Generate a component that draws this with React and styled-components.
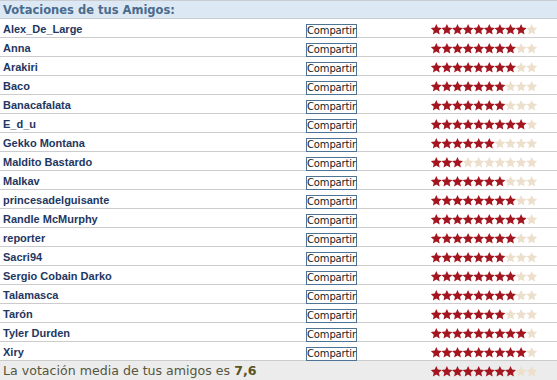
import React from "react";
import styled, { createGlobalStyle } from "styled-components";

const Global = createGlobalStyle`
  html, body { margin: 0; padding: 0; background: #ffffff; }
  body { font-family: "DejaVu Sans", Verdana, sans-serif; }
`;

const Panel = styled.div`
  width: 557px;
  display: flex;
  flex-direction: column;
`;

const Header = styled.div`
  height: 17px;
  border-top: 1px solid #c9cdd2;
  border-bottom: 1px solid #c9cdd2;
  background: #dce8f4;
  display: flex;
  align-items: center;
  padding-left: 3px;
  font-family: "DejaVu Sans", Verdana, sans-serif;
  font-weight: bold;
  font-size: 11.5px;
  color: #4a6b8c;
`;

const Row = styled.div`
  height: 18px;
  border-bottom: 1px solid #cccccc;
  display: grid;
  grid-template-columns: 303px 125px 1fr;
  align-items: center;
  padding-left: 3px;
  background: ${(p) => (p.$footer ? "#ececec" : "#ffffff")};
  ${(p) => (p.$footer ? "border-bottom: none; height: 19px;" : "")}
`;

const Name = styled.span`
  font-family: "Liberation Sans", Arial, sans-serif;
  font-weight: bold;
  font-size: 11px;
  color: #1e3762;
  white-space: nowrap;
`;

const ShareButton = styled.button`
  width: 51px;
  height: 14px;
  box-sizing: border-box;
  border: 1px solid #4f7394;
  background: #ffffff;
  padding: 0;
  margin: 0;
  overflow: visible;
  white-space: nowrap;
  text-align: left;
  font-family: "DejaVu Sans", Verdana, sans-serif;
  font-size: 10px;
  letter-spacing: -0.15px;
  line-height: 12px;
  color: #1a1a1a;
`;

const FooterText = styled.span`
  grid-column: 1 / 3;
  font-family: "DejaVu Sans", Verdana, sans-serif;
  font-size: 12.6px;
  color: #56563e;
  white-space: nowrap;
  b { color: #5a531c; }
`;

const StarSvg = styled.svg`
  display: block;
  margin-top: 1px;
`;

const starPoints = (cx, cy, R, r) => {
  const pts = [];
  for (let i = 0; i < 10; i++) {
    const a = -Math.PI / 2 + (i * Math.PI) / 5;
    const rad = i % 2 === 0 ? R : r;
    pts.push(`${(cx + rad * Math.cos(a)).toFixed(2)},${(cy + rad * Math.sin(a)).toFixed(2)}`);
  }
  return pts.join(" ");
};

const Stars = ({ value }) => (
  <StarSvg width="107" height="11" viewBox="0 0 107 11">
    {Array.from({ length: 10 }).map((_, i) => (
      <polygon
        key={i}
        points={starPoints(5.3 + i * 10.6, 5.8, 5.8, 2.7)}
        fill={i < value ? "#a3161f" : "#ecdfcc"}
      />
    ))}
  </StarSvg>
);

const friends = [
  ["Alex_De_Large", 9],
  ["Anna", 8],
  ["Arakiri", 8],
  ["Baco", 7],
  ["Banacafalata", 7],
  ["E_d_u", 9],
  ["Gekko Montana", 6],
  ["Maldito Bastardo", 3],
  ["Malkav", 7],
  ["princesadelguisante", 8],
  ["Randle McMurphy", 9],
  ["reporter", 8],
  ["Sacri94", 7],
  ["Sergio Cobain Darko", 8],
  ["Talamasca", 8],
  ["Tarón", 7],
  ["Tyler Durden", 9],
  ["Xiry", 9],
];

export default function App() {
  return (
    <>
      <Global />
      <Panel>
        <Header>Votaciones de tus Amigos:</Header>
        {friends.map(([name, v]) => (
          <Row key={name}>
            <Name>{name}</Name>
            <div>
              <ShareButton>Compartir</ShareButton>
            </div>
            <Stars value={v} />
          </Row>
        ))}
        <Row $footer>
          <FooterText>
            La votación media de tus amigos es <b>7,6</b>
          </FooterText>
          <Stars value={8} />
        </Row>
      </Panel>
    </>
  );
}
